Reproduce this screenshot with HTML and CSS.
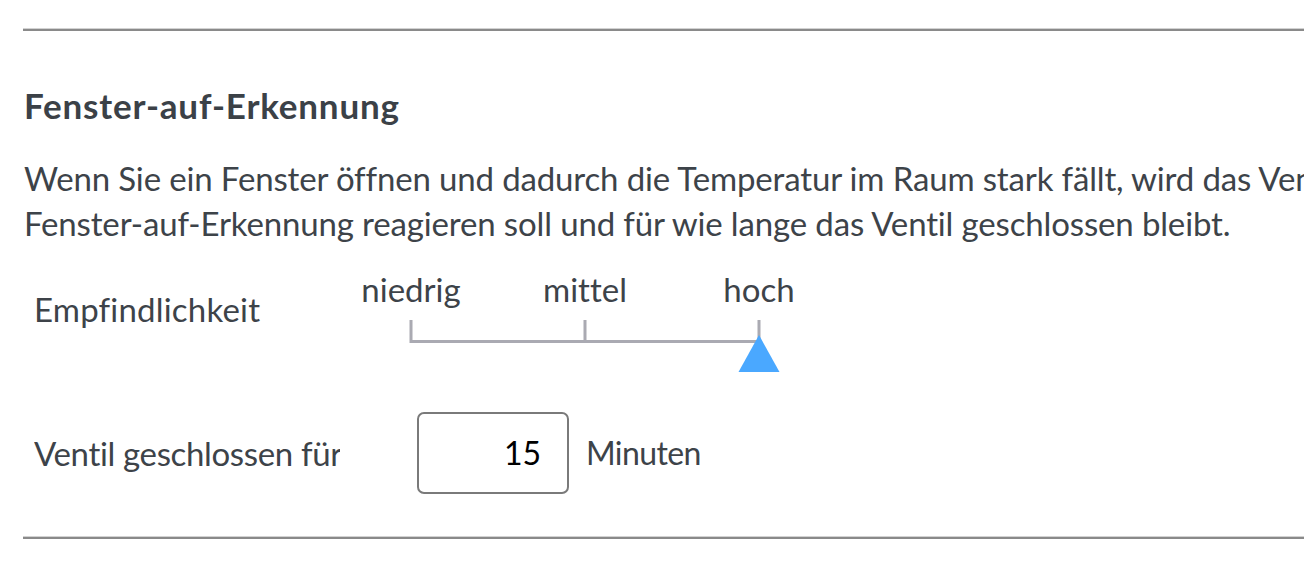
FILE: index.html
```html
<!DOCTYPE html>
<html lang="de">
<head>
<meta charset="utf-8">
<title>Fenster-auf-Erkennung</title>
<link rel="stylesheet" href="styles.css">
</head>
<body>
<div class="page">
  <hr class="rule">
  <h2 class="title">Fenster-auf-Erkennung</h2>
  <p class="desc">Wenn Sie ein Fenster öffnen und dadurch die Temperatur im Raum stark fällt, wird das Ventil geschlossen. Stellen Sie ein, wie empfindlich die<br>Fenster-auf-Erkennung reagieren soll und für wie lange das Ventil geschlossen bleibt.</p>
  <div class="row row-sens">
    <div class="label label-sens">Empfindlichkeit</div>
    <div class="scale">
      <div class="scale-labels">
        <span>niedrig</span>
        <span>mittel</span>
        <span>hoch</span>
      </div>
      <svg class="scale-track" width="522" height="70" viewBox="0 0 522 70">
        <path d="M87 11 V32.5 H435 M261 11 V32.5 M435 11 V32.5" fill="none" stroke="#aaaab2" stroke-width="3"/>
        <polygon points="435,26 455.5,63 414.5,63" fill="#4aa8ff"/>
      </svg>
    </div>
  </div>
  <div class="row row-time">
    <div class="label label-time">Ventil geschlossen für</div>
    <div class="input">15</div>
    <div class="unit">Minuten</div>
  </div>
  <hr class="rule rule-bottom">
</div>
</body>
</html>
```
FILE: styles.css
```css
html, body {
  margin: 0;
  padding: 0;
  background: #ffffff;
  overflow: hidden;
}
.page {
  width: 1400px;
  padding: 28px 0 0 23px;
  font-family: "Lato", "Noto Sans", sans-serif;
  font-variant-ligatures: no-common-ligatures;
  color: #3d4349;
}
.rule {
  margin: 0;
  height: 0;
  border: 0;
  border-top: 1px solid #d2d2d2;
  border-bottom: 2px solid #8a8a8a;
}
.title {
  margin: 54px 0 0 1px;
  font-size: 35px;
  line-height: 40px;
  font-weight: 700;
  letter-spacing: 0.8px;
  color: #3b4147;
}
.desc {
  margin: 31px 0 0 1px;
  font-size: 33px;
  line-height: 45px;
  letter-spacing: -0.15px;
  white-space: nowrap;
}
.row {
  display: flex;
  padding-left: 11px;
}
.row-sens {
  margin-top: 23px;
  align-items: flex-start;
}
.label {
  font-size: 33px;
  line-height: 40px;
  white-space: nowrap;
  overflow: hidden;
}
.label-sens {
  width: 290px;
  margin-top: 20px;
  letter-spacing: 0.2px;
}
.scale {
  display: flex;
  flex-direction: column;
}
.scale-labels {
  display: grid;
  grid-template-columns: repeat(3, 174px);
  font-size: 33px;
  line-height: 40px;
  text-align: center;
}
.scale-track {
  display: block;
}
.row-time {
  margin-top: 33px;
  align-items: center;
}
.label-time {
  width: 306px;
  margin-right: 77px;
  letter-spacing: -0.35px;
}
.input {
  box-sizing: border-box;
  width: 152px;
  height: 82px;
  border: 2px solid #7a7a7a;
  border-radius: 7px;
  padding-right: 26px;
  text-align: right;
  font-size: 32px;
  line-height: 78px;
  color: #000000;
}
.unit {
  margin-left: 17px;
  font-size: 32px;
  line-height: 40px;
  letter-spacing: -0.6px;
}
.rule-bottom {
  margin-top: 42px;
}
```
